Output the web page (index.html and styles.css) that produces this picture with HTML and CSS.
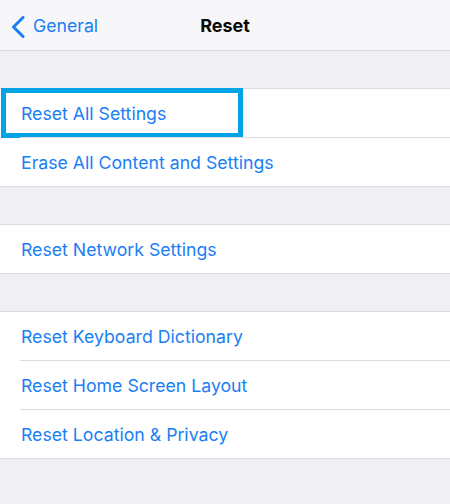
FILE: index.html
```
<!DOCTYPE html>
<html lang="en">
<head>
<meta charset="utf-8">
<title>Reset</title>
<link rel="stylesheet" href="styles.css">
</head>
<body>
<header class="nav">
  <a class="back" href="#">
    <svg class="chev" width="14" height="22" viewBox="0 0 14 22"><path d="M12 1.5 L2.5 11 L12 20.5" fill="none" stroke="#1a7ef5" stroke-width="3" stroke-linecap="round" stroke-linejoin="round"/></svg>
    <span>General</span>
  </a>
  <h1 class="title">Reset</h1>
</header>
<main class="content">
  <ul class="group">
    <li class="row highlighted">Reset All Settings</li>
    <li class="row">Erase All Content and Settings</li>
  </ul>
  <ul class="group">
    <li class="row">Reset Network Settings</li>
  </ul>
  <ul class="group">
    <li class="row">Reset Keyboard Dictionary</li>
    <li class="row">Reset Home Screen Layout</li>
    <li class="row">Reset Location &amp; Privacy</li>
  </ul>
</main>
</body>
</html>
```
FILE: styles.css
```
html, body {
  margin: 0;
  padding: 0;
  background: #efeff4;
  font-family: "Inter", "Liberation Sans", sans-serif;
  -webkit-font-smoothing: antialiased;
}
.nav {
  position: relative;
  height: 50px;
  background: #f7f7f9;
  border-bottom: 1px solid #d9d9dd;
  display: flex;
  align-items: center;
  justify-content: center;
}
.back {
  position: absolute;
  left: 11px;
  top: 0;
  bottom: 0;
  display: flex;
  align-items: center;
  gap: 8px;
  color: #1a7ef5;
  text-decoration: none;
  font-size: 17.7px;
}
.back .chev {
  margin-top: 3px;
}
.back span {
  margin-top: 1px;
}
.title {
  margin: 0;
  font-size: 18px;
  font-weight: 700;
  color: #0a0a0a;
}
.content {
  display: flex;
  flex-direction: column;
  gap: 37px;
  padding-top: 37px;
}
.group {
  list-style: none;
  margin: 0;
  padding: 0;
  background: #fff;
  border-top: 1px solid #dcdce0;
  border-bottom: 1px solid #dcdce0;
}
.row {
  position: relative;
  height: 48px;
  display: flex;
  align-items: center;
  padding-left: 21px;
  font-size: 17.7px;
  color: #1a7ef5;
}
.row + .row {
  border-top: 1px solid #dcdce0;
  margin-left: 20px;
  padding-left: 1px;
}
.highlighted::after {
  content: "";
  position: absolute;
  left: 1px;
  top: -1px;
  width: 242px;
  height: 50px;
  box-sizing: border-box;
  border: 5px solid #03a3e6;
}
```
